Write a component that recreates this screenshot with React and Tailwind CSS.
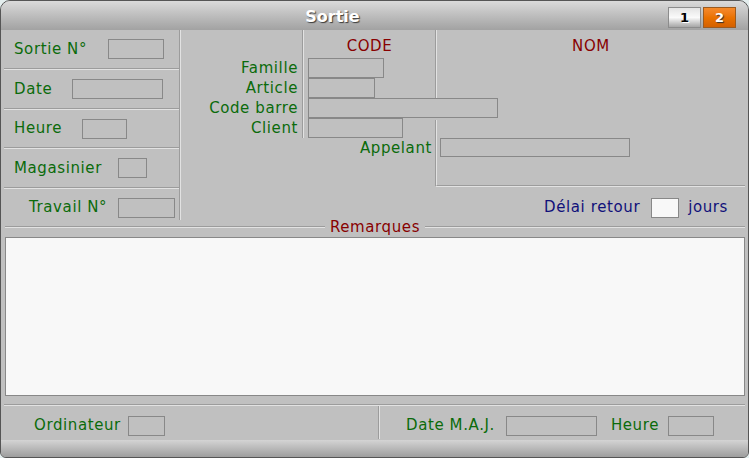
const labelCls = 'text-[#0b6b0b]';
const font = { fontFamily: '"DejaVu Sans", Verdana, sans-serif' };

function Field({ w, className = '', white = false }) {
  return (
    <div
      className={`h-[20px] border border-[#888888] shrink-0 ${white ? 'bg-[#f8f8f8]' : 'bg-[#c0c0c0]'} ${className}`}
      style={{ width: w }}
    />
  );
}

function HGroove() {
  return <div className="h-[2px] border-t border-[#9c9c9c] bg-[#e2e2e2] shrink-0" />;
}

function VGroove() {
  return <div className="w-[2px] border-l border-[#9c9c9c] bg-[#e2e2e2] shrink-0 self-stretch" />;
}

function LeftRow({ label, w, h, pl = 'pl-[10px]', gap = 'ml-[20px]', extra = '' }) {
  return (
    <div className={`flex items-center ${pl} ${extra}`} style={{ height: h }}>
      <span className={labelCls}>{label}</span>
      <Field w={w} className={gap} />
    </div>
  );
}

function CodeRow({ label, w, groove = false }) {
  return (
    <div className="flex h-[20px]">
      <div className={`w-[121px] text-right pr-[4px] leading-[20px] whitespace-nowrap ${labelCls}`}>{label}</div>
      <VGroove />
      <div className={`flex items-center ${groove ? 'w-[131px]' : ''}`}>
        <Field w={w} className="ml-[4px]" />
      </div>
      {groove && <VGroove />}
    </div>
  );
}

export default function App() {
  return (
    <div className="w-[749px] h-[458px] bg-[#e4eeee] text-[15px] tracking-[0.6px]" style={font}>
      <div className="w-full h-full flex flex-col border border-[#555555] rounded-t-[10px] rounded-b-[6px] overflow-hidden bg-[#c0c0c0]">
        {/* title bar */}
        <div className="h-[29px] flex shrink-0 bg-gradient-to-b from-[#dadada] to-[#a2a2a2] tracking-normal">
          <div className="flex-1 text-center pt-[6px] font-bold text-[16px] leading-[20px] text-white [text-shadow:1px_1px_1px_#3a3a3a]">
            Sortie
          </div>
          <div className="flex items-start pt-[6px] pl-[4px] pr-[12px] gap-[2px] text-[13px] font-bold">
            <div className="w-[33px] h-[21px] flex items-center justify-center border border-[#8c8c8c] bg-gradient-to-b from-[#e4e4e4] via-[#fafafa] to-[#a6a6a6] text-black [text-shadow:1px_1px_0_#ffffff]">
              1
            </div>
            <div className="w-[33px] h-[21px] flex items-center justify-center border border-[#9a5a20] bg-gradient-to-b from-[#f58a2a] via-[#ea7200] to-[#d46000] text-white [text-shadow:1px_1px_1px_#303030]">
              2
            </div>
          </div>
        </div>

        {/* body */}
        <div className="flex-1 flex flex-col px-[3px]">
          <div className="flex h-[190px]">
            {/* left column */}
            <div className="w-[175px] flex flex-col">
              <LeftRow label="Sortie N°" w={56} h={38} gap="ml-[21px]" />
              <HGroove />
              <LeftRow label="Date" w={91} h={38} />
              <HGroove />
              <LeftRow label="Heure" w={45} h={37} />
              <HGroove />
              <LeftRow label="Magasinier" w={29} h={38} gap="ml-[16px]" />
              <HGroove />
              <LeftRow label="Travail N°" w={57} h={31} pl="pl-[25px]" gap="ml-[11px]" extra="pt-[6px]" />
            </div>
            <VGroove />

            {/* code / nom */}
            <div className="flex-1 flex flex-col">
              <div className="flex h-[28px]">
                <div className="w-[121px]" />
                <VGroove />
                <div className="w-[131px] text-center pt-[7px] text-[#880000] leading-[18px]">CODE</div>
                <VGroove />
                <div className="flex-1 text-center pt-[7px] text-[#880000] leading-[18px]">NOM</div>
              </div>
              <CodeRow label="Famille" w={76} groove />
              <CodeRow label="Article" w={67} groove />
              <CodeRow label="Code barre" w={190} />
              <div className="flex h-[69px]">
                <div className="w-[254px] flex flex-col">
                  <CodeRow label="Client" w={95} />
                  <div className={`h-[20px] leading-[20px] text-right pr-[3px] ${labelCls}`}>Appelant</div>
                </div>
                <div className="flex-1 mt-[2px] border-l border-b border-l-[#9c9c9c] border-b-[#e2e2e2]">
                  <div className="h-full border-l border-b border-l-[#e2e2e2] border-b-[#9c9c9c] pl-[3px] pt-[18px]">
                    <div className="w-[190px] h-[19px] border border-[#888888]" />
                  </div>
                </div>
              </div>
              <div className="flex-1 flex items-center justify-end pt-[8px] pr-[17px] text-[#10107a]">
                <span>Délai retour</span>
                <Field w={28} white className="ml-[11px]" />
                <span className="ml-[9px]">jours</span>
              </div>
            </div>
          </div>

          {/* remarques */}
          <div className="h-[14px] flex items-center gap-[5px] pl-[1px]">
            <div className="flex-1"><HGroove /></div>
            <span className="leading-none text-[#880000]">Remarques</span>
            <div className="flex-1"><HGroove /></div>
          </div>
          <div className="mt-[3px] ml-[1px] h-[159px] border border-[#888888] bg-[#f8f8f8]" />

          <div className="mt-[8px]"><HGroove /></div>
          <div className="flex h-[33px]">
            <div className="w-[374px] flex items-center pt-[6px] pl-[30px]">
              <span className={labelCls}>Ordinateur</span>
              <Field w={37} className="ml-[7px]" />
            </div>
            <VGroove />
            <div className="flex-1 flex items-center pt-[6px] pl-[26px]">
              <span className={labelCls}>Date M.A.J.</span>
              <Field w={91} className="ml-[11px]" />
              <span className={`ml-[14px] ${labelCls}`}>Heure</span>
              <Field w={46} className="ml-[9px]" />
            </div>
          </div>
        </div>

        {/* bottom bar */}
        <div className="h-[17px] shrink-0 bg-gradient-to-b from-[#d4d4d4] to-[#9e9e9e]" />
      </div>
    </div>
  );
}
